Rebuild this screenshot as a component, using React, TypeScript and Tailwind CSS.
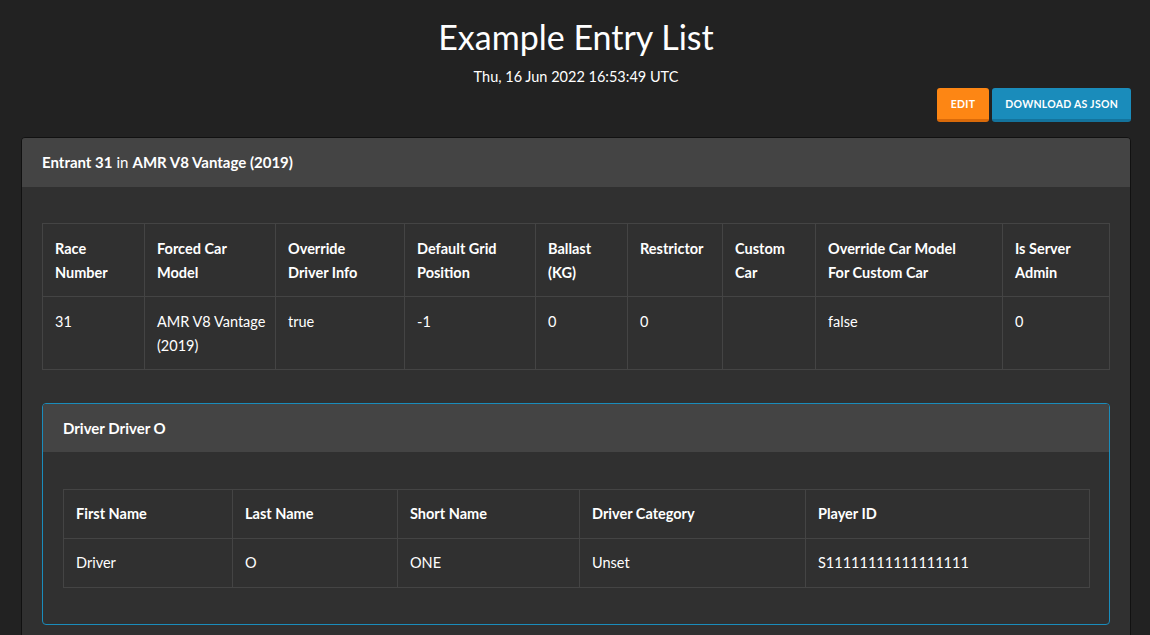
import React from "react";

const font = { fontFamily: "Lato, 'Open Sans', sans-serif" };

const entrantHead = [
  ["Race", "Number"],
  ["Forced Car", "Model"],
  ["Override", "Driver Info"],
  ["Default Grid", "Position"],
  ["Ballast", "(KG)"],
  ["Restrictor"],
  ["Custom", "Car"],
  ["Override Car Model", "For Custom Car"],
  ["Is Server", "Admin"],
];
const entrantRow = [["31"], ["AMR V8 Vantage", "(2019)"], ["true"], ["-1"], ["0"], ["0"], [""], ["false"], ["0"]];
const entrantWidths = ["w-[102px]", "w-[131px]", "w-[129px]", "w-[131px]", "w-[92px]", "w-[95px]", "w-[93px]", "w-[187px]", "w-[107px]"];

const driverHead = ["First Name", "Last Name", "Short Name", "Driver Category", "Player ID"];
const driverRow = ["Driver", "O", "ONE", "Unset", "S11111111111111111"];
const driverWidths = ["w-[169px]", "w-[165px]", "w-[182px]", "w-[226px]", "w-[284px]"];

function Lines({ lines }: { lines: string[] }) {
  return (
    <>
      {lines.map((l, i) => (
        <div key={i} className="whitespace-nowrap">
          {l}
        </div>
      ))}
    </>
  );
}

export default function App() {
  return (
    <div className="min-h-[635px] bg-[#222222] text-white" style={font}>
      <div className="pl-[21px] pr-[19px] pb-6">
        {/* Titel */}
        <div className="pt-[15px] text-center">
          <h1 className="text-[34px] leading-[44px] font-normal">Example Entry List</h1>
          <p className="mt-[8px] text-[14.5px] leading-5">Thu, 16 Jun 2022 16:53:49 UTC</p>
        </div>

        {/* Aktionen */}
        <div className="mt-[1px] flex justify-end gap-[3px]">
          <button className="h-[34px] rounded-[3px] border-b-[3px] border-[#d96a0a] bg-[#fd8614] px-[14px] pt-[2px] text-[10.5px] font-bold tracking-wide">
            EDIT
          </button>
          <button className="h-[34px] rounded-[3px] border-b-[3px] border-[#14739c] bg-[#1a8cbb] px-[13px] pt-[2px] text-[10.5px] font-bold tracking-wide">
            DOWNLOAD AS JSON
          </button>
        </div>

        {/* Entrant-Karte */}
        <div className="mt-[15px] overflow-hidden rounded-[4px] border border-[#111111] bg-[#303030]">
          <div className="flex h-[49px] items-center bg-[#444444] px-5 text-[15px]">
            <span className="font-bold">Entrant 31</span>
            <span className="mx-[4px]">in</span>
            <span className="font-bold">AMR V8 Vantage (2019)</span>
          </div>
          <div className="px-5 pt-[36px] pb-8">
            <table className="w-full table-fixed border-collapse text-[14.5px] leading-6">
              <thead>
                <tr className="h-[73px]">
                  {entrantHead.map((h, i) => (
                    <th key={i} className={`${entrantWidths[i]} border border-[#444444] px-3 pt-[13px] text-left align-top font-bold`}>
                      <Lines lines={h} />
                    </th>
                  ))}
                </tr>
              </thead>
              <tbody>
                <tr className="h-[73px]">
                  {entrantRow.map((c, i) => (
                    <td key={i} className="border border-[#444444] px-3 pt-[13px] align-top">
                      <Lines lines={c} />
                    </td>
                  ))}
                </tr>
              </tbody>
            </table>

            {/* Fahrer-Karte */}
            <div className="mt-[33px] overflow-hidden rounded-[4px] border border-[#1a8cbb] bg-[#303030]">
              <div className="flex h-[48px] items-center bg-[#444444] px-5 text-[15px] font-bold">Driver Driver O</div>
              <div className="px-5 pt-[37px] pb-[36px]">
                <table className="w-full table-fixed border-collapse text-[14.5px] leading-6">
                  <thead>
                    <tr className="h-[49px]">
                      {driverHead.map((h, i) => (
                        <th key={i} className={`${driverWidths[i]} border border-[#444444] px-3 text-left font-bold`}>
                          {h}
                        </th>
                      ))}
                    </tr>
                  </thead>
                  <tbody>
                    <tr className="h-[49px]">
                      {driverRow.map((c, i) => (
                        <td key={i} className="border border-[#444444] px-3">
                          {c}
                        </td>
                      ))}
                    </tr>
                  </tbody>
                </table>
              </div>
            </div>
          </div>
        </div>
      </div>
    </div>
  );
}
